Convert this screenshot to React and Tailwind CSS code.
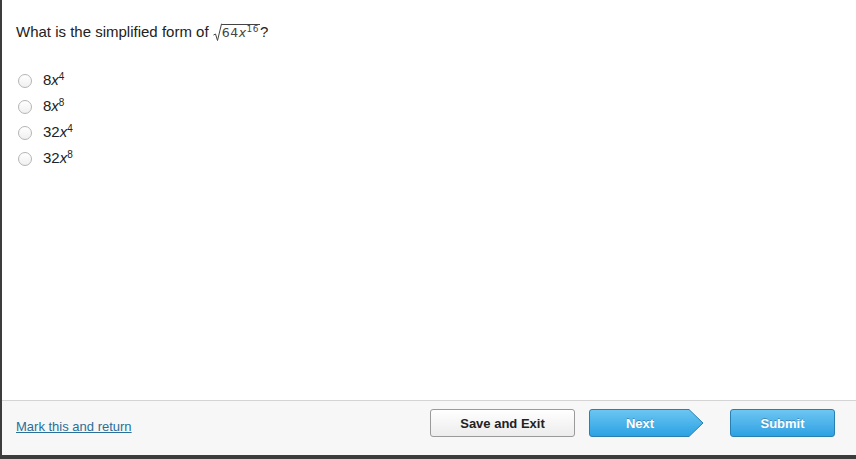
export default function App() {
  const options = [
    { c: "8", e: "4" },
    { c: "8", e: "8" },
    { c: "32", e: "4" },
    { c: "32", e: "8" },
  ];
  return (
    <div className="w-[856px] h-[459px] bg-[#3c3c3c] flex flex-col font-['Liberation_Sans',Arial,sans-serif]">
      <div className="ml-[2px] flex-1 flex flex-col bg-white">
        <div className="flex-1 pl-[14px] pt-[22px]">
          <div className="text-[15px] text-[#222] flex items-center h-[20px]">
            <span>What is the simplified form of&nbsp;</span>
            <span className="inline-flex items-end font-['DejaVu_Sans',Verdana,sans-serif] text-[#444]">
              <svg width="9" height="19" viewBox="0 0 9 19" className="mb-[-1px]">
                <path d="M0.5 12 L2.5 11 L4.5 17.5 L8.5 1 L9 1" fill="none" stroke="#444" strokeWidth="1" />
              </svg>
              <span className="border-t border-[#444] text-[12.5px] leading-[16px] pr-[1px] tracking-[0.5px]">
                64<span className="italic">x</span>
                <sup className="text-[9px] top-[-0.55em]">16</sup>
              </span>
            </span>
            <span>?</span>
          </div>
          <div className="mt-[29px] flex flex-col gap-[7px] pl-[2px]">
            {options.map((o, i) => (
              <div key={i} className="flex items-center h-[19px]">
                <div className="w-[14px] h-[14px] rounded-full border border-[#b5b5b5] bg-gradient-to-b from-white to-[#f0f0f0]" />
                <span className="ml-[11px] text-[15px] text-[#222]">
                  {o.c}
                  <span className="italic">x</span>
                  <sup className="text-[10px] top-[-0.55em]">{o.e}</sup>
                </span>
              </div>
            ))}
          </div>
        </div>
        <div className="h-[55px] border-t border-[#d4d4d4] bg-[#f7f7f7] flex items-start pt-[8px] pl-[14px]">
          <a className="text-[13px] text-[#2a6f97] underline mt-[8px] w-[414px]">Mark this and return</a>
          <button className="w-[145px] h-[28px] rounded-[3px] border border-[#9a9a9a] bg-gradient-to-b from-white to-[#ececec] text-[13px] font-bold text-[#222] pt-[1px]">
            Save and Exit
          </button>
          <div className="relative ml-[14px] w-[115px] h-[28px] flex items-center justify-center">
            <svg className="absolute inset-0" width="115" height="28" viewBox="0 0 115 28">
              <defs>
                <linearGradient id="g1" x1="0" y1="0" x2="0" y2="1">
                  <stop offset="0" stopColor="#6cc6f2" />
                  <stop offset="1" stopColor="#2aa1e3" />
                </linearGradient>
              </defs>
              <path d="M3 0.5 H100 L114 14 L100 27.5 H3 Q0.5 27.5 0.5 25 V3 Q0.5 0.5 3 0.5 Z" fill="url(#g1)" stroke="#2a7fb0" strokeWidth="1" />
            </svg>
            <span className="relative text-[13px] font-bold text-white pr-[13px] pt-[1px] [text-shadow:0_-1px_0_rgba(0,0,0,0.25)]">Next</span>
          </div>
          <button className="ml-[26px] w-[105px] h-[28px] rounded-[3px] border border-[#2a7fb0] bg-gradient-to-b from-[#6cc6f2] to-[#2aa1e3] text-[13px] font-bold text-white pt-[1px] [text-shadow:0_-1px_0_rgba(0,0,0,0.25)]">
            Submit
          </button>
        </div>
      </div>
      <div className="h-[4px]" />
    </div>
  );
}
